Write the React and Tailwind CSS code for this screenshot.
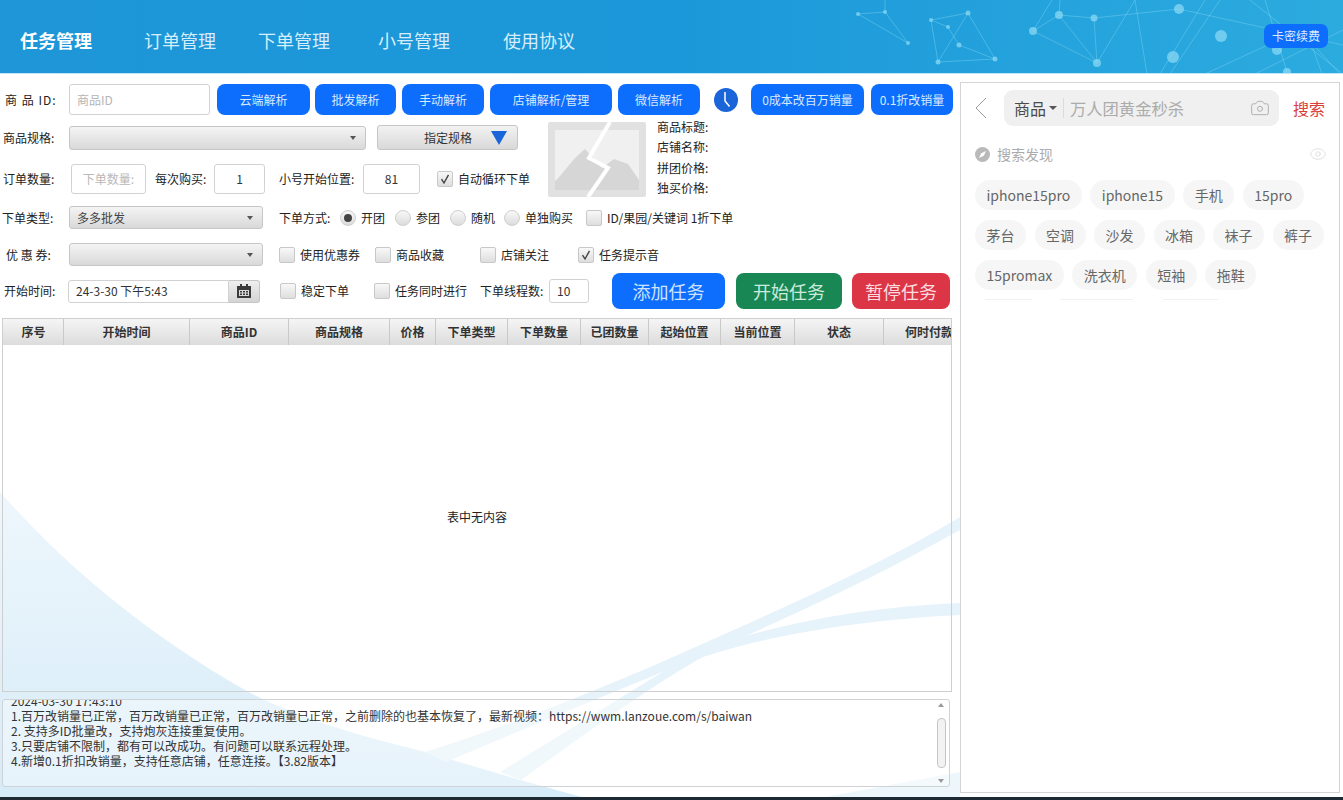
import { Camera, Eye } from "lucide-react";

const navItems = [
  { label: "任务管理", className: "ml-[20px] w-[72px] font-bold text-white" },
  { label: "订单管理", className: "ml-[52px] w-[72px] text-[#d6eefb]" },
  { label: "下单管理", className: "ml-[42px] w-[72px] text-[#d6eefb]" },
  { label: "小号管理", className: "ml-[48px] w-[72px] text-[#d6eefb]" },
  { label: "使用协议", className: "ml-[53px] w-[72px] text-[#d6eefb]" },
];

const columns = [
  { label: "序号", w: "w-[60px]" },
  { label: "开始时间", w: "w-[126px]" },
  { label: "商品ID", w: "w-[99px]" },
  { label: "商品规格", w: "w-[101px]" },
  { label: "价格", w: "w-[46px]" },
  { label: "下单类型", w: "w-[72px]" },
  { label: "下单数量", w: "w-[73px]" },
  { label: "已团数量", w: "w-[68px]" },
  { label: "起始位置", w: "w-[72px]" },
  { label: "当前位置", w: "w-[74px]" },
  { label: "状态", w: "w-[89px]" },
];

const tagRows = [
  ["iphone15pro", "iphone15", "手机", "15pro"],
  ["茅台", "空调", "沙发", "冰箱", "袜子", "裤子"],
  ["15promax", "洗衣机", "短袖", "拖鞋"],
];

const nodes = [
  [858, 14, 2], [885, 12, 2], [908, 43, 2], [931, 20, 2], [948, 27, 2], [968, 13, 2.5], [959, 45, 2.5],
  [938, 62, 2.5], [995, 59, 2.5], [1033, 31, 4], [1059, 15, 4], [1094, 18, 3.5], [1097, 63, 4], [1179, 9, 5],
  [1221, 36, 6], [1173, 57, 6], [1277, 50, 5], [1287, 72, 4],
];

const links = [
  [858, 14, 885, 12], [885, 12, 908, 43], [858, 14, 908, 43], [885, 0, 885, 12], [931, 20, 968, 13], [931, 20, 938, 62],
  [968, 13, 995, 59], [968, 13, 938, 62], [948, 27, 959, 45], [938, 62, 995, 59], [959, 45, 995, 59], [931, 20, 948, 27],
  [1033, 31, 1059, 15], [1059, 15, 1097, 63], [1033, 31, 1097, 63], [1094, 18, 1097, 63], [1059, 15, 1060, 0], [1033, 31, 1052, 0],
  [1097, 63, 1135, 0], [1059, 15, 1094, 18], [1135, 0, 1147, 74], [1160, 74, 1205, 0], [1170, 74, 1220, 0],
  [1179, 9, 1343, 45], [1205, 74, 1300, 30], [1250, 0, 1343, 74], [1300, 30, 1340, 74], [1094, 18, 1179, 9],
  [1265, 0, 1287, 72], [1255, 74, 1343, 30], [1310, 40, 1322, 74],
];

function Label({ children, className = "" }) {
  return <span className={`shrink-0 whitespace-nowrap text-[12px] leading-[16px] text-[#222] ${className}`}>{children}</span>;
}

function BlueButton({ children, className = "" }) {
  return (
    <button className={`flex h-[31px] shrink-0 items-center justify-center rounded-[8px] bg-[#0d6efd] text-[12px] text-[#d9e9ff] ${className}`}>
      {children}
    </button>
  );
}

function TextBox({ children, className = "" }) {
  return (
    <div className={`flex shrink-0 items-center justify-center rounded-[3px] border border-[#d2d2d2] bg-white text-[12px] text-[#333] ${className}`}>
      {children}
    </div>
  );
}

function Dropdown({ value, className = "" }) {
  return (
    <div className={`flex h-[23px] shrink-0 items-center justify-between rounded-[3px] border border-[#c6c6c6] bg-gradient-to-b from-[#f4f4f4] to-[#d9d9d9] pl-[7px] pr-[9px] text-[12px] text-[#444] ${className}`}>
      <span>{value}</span>
      <span className="border-x-[3.5px] border-t-[4px] border-x-transparent border-t-[#555]" />
    </div>
  );
}

function Check({ label, checked = false, className = "" }) {
  return (
    <div className={`flex shrink-0 items-center gap-[5px] ${className}`}>
      <span className="flex h-[16px] w-[16px] items-center justify-center rounded-[2px] border border-[#c8c8c8] bg-gradient-to-b from-[#f8f8f8] to-[#dedede]">
        {checked && (
          <svg width="12" height="12" viewBox="0 0 12 12" fill="none">
            <path d="M2.5 6.2 5 10 9.5 1.8" stroke="#444" strokeWidth="1.4" />
          </svg>
        )}
      </span>
      <Label>{label}</Label>
    </div>
  );
}

function Radio({ label, checked = false, className = "" }) {
  return (
    <div className={`flex shrink-0 items-center gap-[5px] ${className}`}>
      <span className="flex h-[16px] w-[16px] items-center justify-center rounded-full border border-[#cfcfcf] bg-gradient-to-b from-[#f8f8f8] to-[#dcdcdc]">
        {checked && <span className="h-[8px] w-[8px] rounded-full bg-[#444]" />}
      </span>
      <Label>{label}</Label>
    </div>
  );
}

function BigButton({ children, className = "" }) {
  return (
    <button className={`flex h-[36px] shrink-0 items-center justify-center rounded-[8px] text-[18px] ${className}`}>
      {children}
    </button>
  );
}

function Header() {
  return (
    <header className="relative flex h-[74px] items-center overflow-hidden border-b border-[#bfe6f7] bg-gradient-to-r from-[#1e96d8] via-[#1b98d9] to-[#2cabdf]">
      <svg className="absolute left-0 top-0 blur-[0.6px]" width="1343" height="74" viewBox="0 0 1343 74">
        {links.map(([x1, y1, x2, y2], i) => (
          <line key={i} x1={x1} y1={y1} x2={x2} y2={y2} stroke="#7fd4f2" strokeWidth="0.8" opacity="0.55" />
        ))}
        {nodes.map(([cx, cy, r], i) => (
          <circle key={i} cx={cx} cy={cy} r={r} fill="#8fdcf5" opacity="0.7" />
        ))}
      </svg>
      <nav className="relative flex items-center pt-[8px] text-[18px]">
        {navItems.map((item) => (
          <span key={item.label} className={`shrink-0 whitespace-nowrap ${item.className}`}>{item.label}</span>
        ))}
      </nav>
      <button className="relative ml-auto mr-[15px] mt-[-1px] flex h-[24px] w-[64px] items-center justify-center rounded-[7px] bg-[#0d6efd] text-[12px] text-[#dcebff]">
        卡密续费
      </button>
    </header>
  );
}

function Toolbar() {
  return (
    <div className="mt-[10px] flex items-center">
      <Label className="ml-[5px] w-[64px] tracking-[1px]">商 品 ID:</Label>
      <TextBox className="h-[31px] w-[141px] !justify-start pl-[7px] !text-[#b5b5b5]">商品ID</TextBox>
      <BlueButton className="ml-[7px] w-[93px]">云端解析</BlueButton>
      <BlueButton className="ml-[5px] w-[81px]">批发解析</BlueButton>
      <BlueButton className="ml-[6px] w-[82px]">手动解析</BlueButton>
      <BlueButton className="ml-[6px] w-[122px]">店铺解析/管理</BlueButton>
      <BlueButton className="ml-[6px] w-[82px]">微信解析</BlueButton>
      <svg className="ml-[14px] shrink-0" width="24" height="24" viewBox="0 0 24 24">
        <circle cx="12" cy="12" r="12" fill="#1a66d8" />
        <path d="M11 4v9l4.5 5.5" fill="none" stroke="#fff" strokeWidth="1.5" />
      </svg>
      <BlueButton className="ml-[13px] w-[113px]">0成本改百万销量</BlueButton>
      <BlueButton className="ml-[7px] w-[82px]">0.1折改销量</BlueButton>
    </div>
  );
}

function ProductPreview() {
  return (
    <div className="ml-[30px] mt-[7px] flex">
      <svg width="98" height="75" viewBox="0 0 98 75" className="shrink-0">
        <rect width="98" height="75" fill="#e1e1e1" rx="2" />
        <rect x="7" y="8" width="84" height="50" fill="#f0f0f0" />
        <path d="M7 60 27 36 37 27 54 46 66 37 80 42 91 58V68H7Z" fill="#d6d6d6" />
        <path d="M62 0 41 36 60 46 40 75" fill="none" stroke="#fff" strokeWidth="4" />
      </svg>
      <div className="-mt-[5px] ml-[11px] flex flex-col">
        {["商品标题:", "店铺名称:", "拼团价格:", "独买价格:"].map((t) => (
          <Label key={t} className="!leading-[20.3px]">{t}</Label>
        ))}
      </div>
    </div>
  );
}

function FormRows() {
  return (
    <div className="flex">
      <div className="w-[518px] shrink-0">
        <div className="mt-[10px] flex items-center">
          <Label className="ml-[3px] w-[66px]">商品规格:</Label>
          <Dropdown className="!h-[24px] w-[297px]" />
          <button className="ml-[11px] flex h-[25px] w-[141px] items-center rounded-[3px] border border-[#c6c6c6] bg-gradient-to-b from-[#f2f2f2] to-[#d9d9d9] text-[12px] text-[#333]">
            <span className="ml-[46px]">指定规格</span>
            <span className="ml-[19px] border-x-[8px] border-t-[14px] border-x-transparent border-t-[#1a66d8]" />
          </button>
        </div>
        <div className="mt-[14px] flex items-center">
          <Label className="ml-[3px] w-[68px]">订单数量:</Label>
          <TextBox className="h-[30px] w-[75px] !text-[#b9b9b9]">下单数量:</TextBox>
          <Label className="ml-[9px] w-[59px]">每次购买:</Label>
          <TextBox className="h-[30px] w-[51px]">1</TextBox>
          <Label className="ml-[14px] w-[84px]">小号开始位置:</Label>
          <TextBox className="h-[30px] w-[57px]">81</TextBox>
          <Check className="ml-[17px]" label="自动循环下单" checked />
        </div>
      </div>
      <ProductPreview />
    </div>
  );
}

function OrderRows() {
  return (
    <>
      <div className="mt-[8px] flex items-center">
        <Label className="ml-[2px] w-[67px]">下单类型:</Label>
        <Dropdown className="w-[194px]" value="多多批发" />
        <Label className="ml-[16px] w-[61px]">下单方式:</Label>
        <Radio label="开团" checked />
        <Radio className="ml-[10px]" label="参团" />
        <Radio className="ml-[10px]" label="随机" />
        <Radio className="ml-[9px]" label="单独购买" />
        <Check className="ml-[13px]" label="ID/果园/关键词 1折下单" />
      </div>
      <div className="mt-[14px] flex items-center">
        <Label className="ml-[6px] w-[63px]">优 惠 券:</Label>
        <Dropdown className="w-[194px]" />
        <Check className="ml-[16px]" label="使用优惠券" />
        <Check className="ml-[15px]" label="商品收藏" />
        <Check className="ml-[36px]" label="店铺关注" />
        <Check className="ml-[29px]" label="任务提示音" checked />
      </div>
      <div className="mt-[7px] flex h-[36px] items-center">
        <Label className="ml-[4px] w-[64px]">开始时间:</Label>
        <TextBox className="h-[23px] w-[161px] !justify-start rounded-r-none pl-[7px]">24-3-30 下午5:43</TextBox>
        <div className="flex h-[23px] w-[31px] shrink-0 items-center justify-center rounded-r-[3px] border border-l-0 border-[#c6c6c6] bg-gradient-to-b from-[#efefef] to-[#d4d4d4]">
          <svg width="14" height="14" viewBox="0 0 14 14">
            <path d="M0 2h3V0h2v2h4V0h2v2h3v12H0Z" fill="#3a3a3a" />
            <path d="M2 6h10v6H2Z" fill="#d9d9d9" />
            <path d="M3 7h2v1.5H3ZM6 7h2v1.5H6ZM9 7h2v1.5H9ZM3 9.5h2V11H3ZM6 9.5h2V11H6ZM9 9.5h2V11H9Z" fill="#3a3a3a" />
          </svg>
        </div>
        <Check className="ml-[20px]" label="稳定下单" />
        <Check className="ml-[25px]" label="任务同时进行" />
        <Label className="ml-[13px] w-[69px]">下单线程数:</Label>
        <TextBox className="h-[24px] w-[40px] !justify-start pl-[7px]">10</TextBox>
        <BigButton className="ml-[23px] w-[113px] bg-[#0d6efd] text-[#cfe3ff]">添加任务</BigButton>
        <BigButton className="ml-[11px] w-[106px] bg-[#198754] text-[#cdebdc]">开始任务</BigButton>
        <BigButton className="ml-[10px] w-[98px] bg-[#dc3545] text-[#fbdde0]">暂停任务</BigButton>
      </div>
    </>
  );
}

function TaskTable() {
  return (
    <div className="ml-[2px] mt-[9px] flex h-[374px] w-[950px] flex-col overflow-hidden border border-[#cfcfcf]">
      <div className="flex h-[26px] shrink-0 bg-gradient-to-b from-[#f5f5f5] to-[#dcdcdc] pl-[1px]">
        {columns.map((c) => (
          <div key={c.label} className={`flex shrink-0 items-center justify-center border-r border-[#c9c9c9] text-[12px] font-bold text-[#333] ${c.w}`}>
            {c.label}
          </div>
        ))}
        <div className="flex min-w-0 flex-1 items-center overflow-hidden whitespace-nowrap pl-[21px] text-[12px] font-bold text-[#333]">何时付款</div>
      </div>
      <div className="flex flex-1 items-center justify-center pb-[3px] text-[12px] text-[#222]">表中无内容</div>
    </div>
  );
}

function LogBox() {
  return (
    <div className="ml-[2px] mt-[7px] flex h-[88px] w-[948px] overflow-hidden rounded-[3px] border border-[#cfd3d6] bg-white/40">
      <div className="min-w-0 flex-1 overflow-hidden pl-[8px] text-[12px] leading-[15px] text-[#333]">
        <p className="-mt-[7px]">2024-03-30 17:43:10</p>
        <p className="whitespace-nowrap">1.百万改销量已正常，百万改销量已正常，百万改销量已正常，之前删除的也基本恢复了，最新视频：https://wwm.lanzoue.com/s/baiwan</p>
        <p>2. 支持多ID批量改，支持炮灰连接重复使用。</p>
        <p>3.只要店铺不限制，都有可以改成功。有问题可以联系远程处理。</p>
        <p>4.新增0.1折扣改销量，支持任意店铺，任意连接。【3.82版本】</p>
      </div>
      <div className="mr-[2px] flex w-[12px] shrink-0 flex-col items-center justify-between py-[3px]">
        <span className="border-x-[3px] border-b-[4px] border-x-transparent border-b-[#9a9a9a]" />
        <span className="h-[50px] w-[9px] rounded-[4px] border border-[#c4c4c4] bg-[#f2f2f2]" />
        <span className="border-x-[3px] border-t-[4px] border-x-transparent border-t-[#9a9a9a]" />
      </div>
    </div>
  );
}

function SearchPanel() {
  return (
    <aside className="mt-[8px] h-[711px] w-[380px] shrink-0 overflow-hidden border border-[#d4d4d4] bg-white">
      <div className="mt-[7px] flex items-center">
        <svg className="ml-[14px] shrink-0" width="12" height="22" viewBox="0 0 12 22" fill="none">
          <path d="M11 1 1 11 11 21" stroke="#9a9a9a" strokeWidth="1" />
        </svg>
        <div className="ml-[17px] flex h-[36px] w-[275px] shrink-0 items-center rounded-[9px] bg-[#f0f0f0]">
          <span className="ml-[10px] text-[16px] text-[#4b4b4b]">商品</span>
          <span className="ml-[3px] border-x-[4px] border-t-[4px] border-x-transparent border-t-[#555]" />
          <span className="ml-[6px] h-[20px] w-px bg-[#dcdcdc]" />
          <span className="ml-[6px] text-[16.3px] text-[#ababab]">万人团黄金秒杀</span>
          <Camera className="ml-auto mr-[9px] text-[#b0b0b0]" size={20} strokeWidth={1.2} />
        </div>
        <span className="ml-[14px] text-[16px] text-[#d9403c]">搜索</span>
      </div>
      <div className="mt-[20px] flex h-[16px] items-center">
        <svg className="ml-[14px] shrink-0" width="15" height="15" viewBox="0 0 15 15">
          <circle cx="7.5" cy="7.5" r="7.5" fill="#b9b9b9" />
          <path d="M4 11 6.2 6.2 11 4 8.8 8.8Z" fill="#fff" />
        </svg>
        <span className="ml-[7px] text-[14px] text-[#ababab]">搜索发现</span>
        <Eye className="ml-auto mr-[12px] text-[#dcdcdc]" size={18} strokeWidth={1.2} />
      </div>
      <div className="ml-[14px] mt-[18px] flex flex-col gap-[10px]">
        {tagRows.map((row, i) => (
          <div key={i} className="flex gap-[8.5px]">
            {row.map((tag) => (
              <span key={tag} className="flex h-[30px] items-center rounded-full bg-[#f6f6f6] px-[11.5px] text-[14px] text-[#666]">
                {tag}
              </span>
            ))}
          </div>
        ))}
        <div className="ml-[10px] -mt-[1px] flex h-[1px]">
          <span className="w-[47px] bg-[#f1f1f1]" />
          <span className="ml-[28px] w-[73px] bg-[#f1f1f1]" />
          <span className="ml-[30px] w-[55px] bg-[#f1f1f1]" />
        </div>
      </div>
    </aside>
  );
}

export default function App() {
  return (
    <div className="relative h-[800px] w-[1343px] overflow-hidden bg-white font-['Noto_Sans_CJK_SC','Noto_Sans',sans-serif]">
      {/* ribbons behind the window */}
      <svg className="absolute left-0 top-0" width="960" height="800" viewBox="0 0 960 800">
        <defs>
          <linearGradient id="swoosh" x1="0" y1="0" x2="0" y2="1">
            <stop offset="0" stopColor="#eef7fc" />
            <stop offset="1" stopColor="#d6ebf8" />
          </linearGradient>
        </defs>
        <path d="M0 492C60 560 140 630 245 690 310 725 380 740 429 753L520 780 582 797V800H0Z" fill="url(#swoosh)" />
        <path d="M960 517V530C880 575 800 612 703 655 620 690 520 730 446 762L425 752C510 725 600 690 700 645 790 605 880 565 960 517Z" fill="#e6f3fb" />
        <path d="M960 603V615C860 620 770 635 703 657 660 680 590 730 521 780L500 772C570 730 640 685 696 652 770 625 860 607 960 603Z" fill="#e6f3fb" />
        <path d="M960 772 820 798V800H960Z" fill="#edf6fb" />
      </svg>
      <div className="relative flex h-[797px] flex-col">
        <Header />
        <main className="flex min-h-0 flex-1">
          <div className="w-[960px] shrink-0">
            <Toolbar />
            <FormRows />
            <OrderRows />
            <TaskTable />
            <LogBox />
          </div>
          <SearchPanel />
        </main>
      </div>
      <div className="relative h-[3px] bg-[#1d2a33]" />
    </div>
  );
}
